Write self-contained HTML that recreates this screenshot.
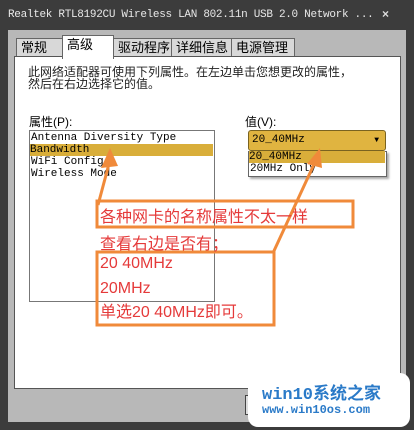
<!DOCTYPE html><html><head><meta charset="utf-8"><style>
body{margin:0;width:414px;height:430px;background:#3c3c3c;position:relative;overflow:hidden;font-family:"Liberation Sans","Noto Sans CJK SC",sans-serif}
.a{position:absolute}
.mono{font-family:"Liberation Mono","Noto Sans CJK SC",monospace;font-size:11px}
.tab{position:absolute;top:38px;height:18px;border:1px solid #666;border-bottom:none;background:#d8d8d8;font-size:13px;line-height:18px;padding:0 4px;color:#000}
.red{color:#e53a3a;font-size:16px}
</style></head><body>
<div class="a mono" style="left:8px;top:9px;color:#e8e8e8;font-size:11px;letter-spacing:-0.3px">Realtek RTL8192CU Wireless LAN 802.11n USB 2.0 Network ...</div>
<div class="a" style="left:382px;top:7px;color:#ddd;font-size:12px;font-weight:bold">×</div>
<div class="a" style="left:8px;top:30px;width:398px;height:392px;background:#b8b8b8"></div>
<div class="tab" style="left:16px;width:40px">常规</div>
<div class="tab" style="left:113px;width:52px">驱动程序</div>
<div class="tab" style="left:171px;width:53px">详细信息</div>
<div class="tab" style="left:231px;width:54px">电源管理</div>
<div class="a" style="left:14px;top:56px;width:385px;height:331px;background:#fff;border:1px solid #555"></div>
<div class="tab" style="left:62px;top:35px;height:23px;width:42px;background:#fff;z-index:2">高级</div>
<div class="a" style="left:28px;top:66px;font-size:12px;line-height:12px;color:#222">此网络适配器可使用下列属性。在左边单击您想更改的属性，<br>然后在右边选择它的值。</div>
<div class="a" style="left:29px;top:113px;font-size:12px">属性(P):</div>
<div class="a" style="left:245px;top:113px;font-size:12px">值(V):</div>
<div class="a" style="left:29px;top:130px;width:184px;height:170px;border:1px solid #777;background:#fff"></div>
<div class="a mono" style="left:31px;top:132px;line-height:12px">Antenna Diversity Type</div>
<div class="a mono" style="left:30px;top:144px;width:183px;height:12px;line-height:12px;background:#d9ae3a">Bandwidth</div>
<div class="a mono" style="left:31px;top:156px;line-height:12px">WiFi Config<br>Wireless Mode</div>
<div class="a mono" style="left:248px;top:130px;width:136px;height:19px;line-height:19px;background:#e0b440;border:1px solid #7a6320;border-radius:3px;text-indent:3px">20_40MHz<span style="position:absolute;right:6px;font-size:8px">▼</span></div>
<div class="a" style="left:248px;top:151px;width:137px;height:24px;background:#fff;border:1px solid #666;box-shadow:2px 2px 2px #aaa"></div>
<div class="a mono" style="left:249px;top:151px;width:136px;height:12px;line-height:12px;background:#d9ae3a">20_40MHz</div>
<div class="a mono" style="left:250px;top:163px;line-height:12px">20MHz Only</div>
<svg class="a" style="left:0;top:0" width="414" height="430">
<g stroke="#f08a3a" stroke-width="3" fill="none">
<line x1="98" y1="205" x2="110" y2="160"/>
<line x1="273" y1="253" x2="316" y2="160"/>
<rect x="97" y="201" width="256" height="26"/>
<rect x="97" y="252" width="177" height="73"/>
</g>
<polygon points="110,148 101,168 118,166" fill="#f08a3a"/>
<polygon points="320,148 307,164 322,168" fill="#f08a3a"/>
</svg>
<div class="a red" style="left:100px;top:203px">各种网卡的名称属性不太一样</div>
<div class="a red" style="left:100px;top:230px">查看右边是否有；</div>
<div class="a red" style="left:100px;top:252px;line-height:24.5px">20 40MHz<br>20MHz<br>单选20 40MHz即可。</div>
<div class="a" style="left:245px;top:395px;width:20px;height:18px;border:1px solid #444;background:#ddd"></div>
<div class="a" style="left:248px;top:373px;width:162px;height:54px;background:#fff;border-radius:10px"></div>
<div class="a" style="left:262px;top:379px;color:#2a7ac8;font-size:17px;font-weight:bold;font-family:'Liberation Mono','Noto Sans CJK SC',monospace">win10系统之家</div>
<div class="a" style="left:262px;top:403px;color:#2a7ac8;font-size:12px;font-weight:bold;font-family:'Liberation Mono',monospace">www.win10os.com</div>
</body></html>
